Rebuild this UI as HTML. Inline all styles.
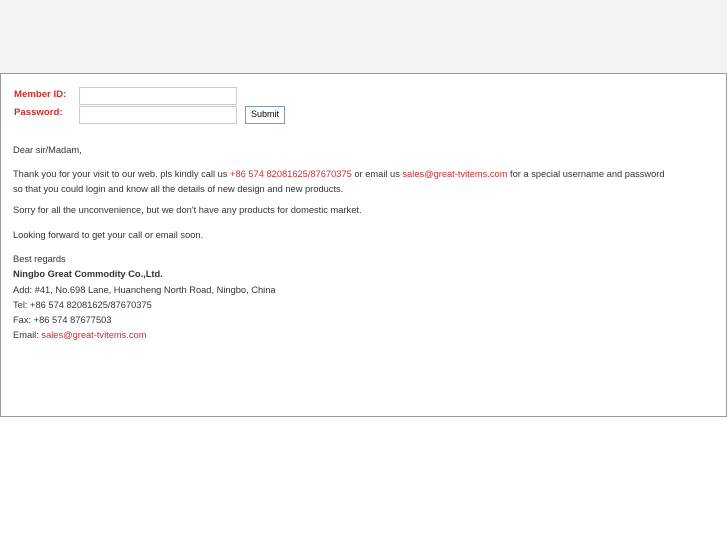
<!DOCTYPE html>
<html><head><style>
body{margin:0;width:727px;height:545px;background:#fff;font-family:"Liberation Sans",sans-serif;font-size:9.3px;color:#333;position:relative;overflow:hidden}
.top{position:absolute;left:0;top:0;width:727px;height:73px;background:#f4f3f4}
.box{position:absolute;left:0;top:73px;width:725px;height:342px;border:1px solid #999;background:#fff}
.t{position:absolute;white-space:nowrap;line-height:12px}
.r{color:#d42a2a}
.l{color:#d42a2a;font-weight:bold;font-size:9.6px}
.in{position:absolute;left:79px;width:156px;height:16px;border:1px solid #ccc;background:#fff}
.btn{position:absolute;left:245px;top:106px;width:38px;height:16px;border:1px solid #7a9cc0;background:#fff;font-size:9px;text-align:center;line-height:14px;color:#000}
</style></head><body>
<div class="top"></div>
<div class="box"></div>
<div class="t l" style="left:14px;top:89px">Member ID:</div>
<div class="t l" style="left:14px;top:107px">Password:</div>
<div class="in" style="top:87px"></div>
<div class="in" style="top:106px"></div>
<div class="btn">Submit</div>
<div class="t" style="left:13px;top:144px">Dear sir/Madam,</div>
<div class="t" style="left:13px;top:168px">Thank you for your visit to our web. pls kindly call us <span class="r">+86 574 82081625/87670375</span> or email us <span class="r">sales@great-tvitems.com</span> for a special username and password</div>
<div class="t" style="left:13px;top:183px">so that you could login and know all the details of new design and new products.</div>
<div class="t" style="left:13px;top:204px">Sorry for all the unconvenience, but we don't have any products for domestic market.</div>
<div class="t" style="left:13px;top:229px">Looking forward to get your call or email soon.</div>
<div class="t" style="left:13px;top:253px">Best regards</div>
<div class="t" style="left:13px;top:268px;font-weight:bold">Ningbo Great Commodity Co.,Ltd.</div>
<div class="t" style="left:13px;top:284px">Add: #41, No.698 Lane, Huancheng North Road, Ningbo, China</div>
<div class="t" style="left:13px;top:299px">Tel: +86 574 82081625/87670375</div>
<div class="t" style="left:13px;top:314px">Fax: +86 574 87677503</div>
<div class="t" style="left:13px;top:329px">Email: <span class="r">sales@great-tvitems.com</span></div>
</body></html>
